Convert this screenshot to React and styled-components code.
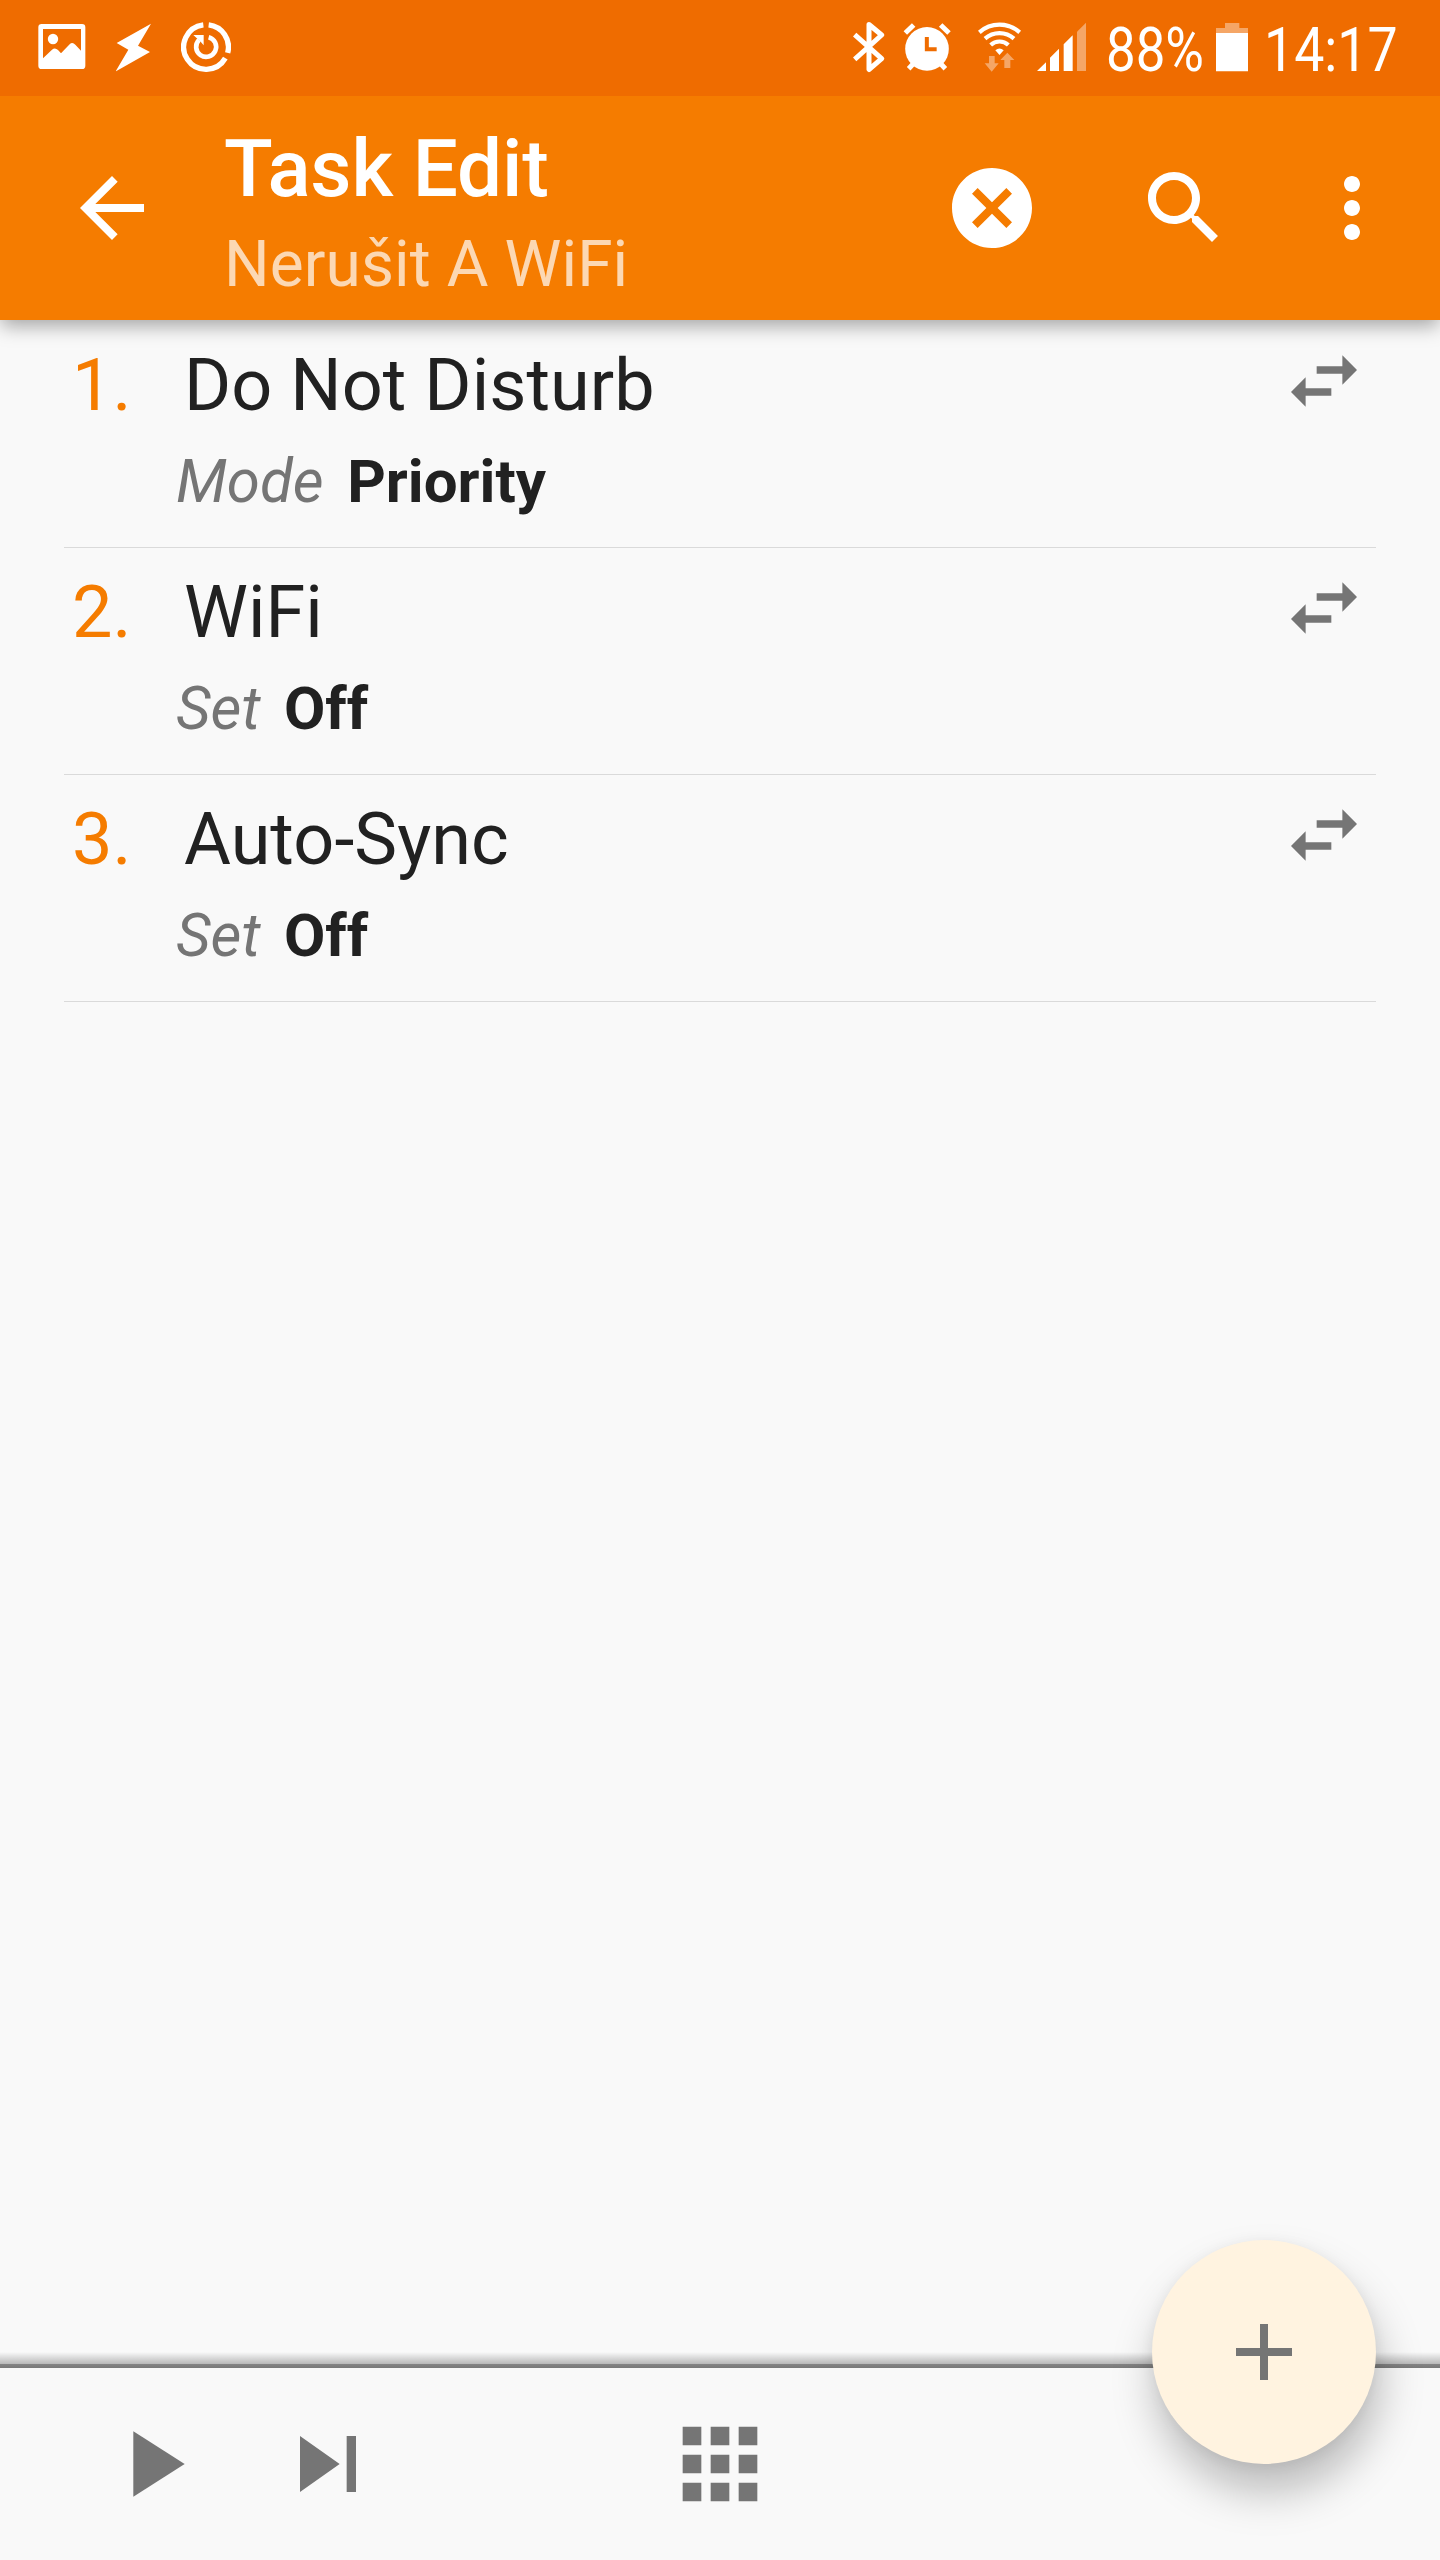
import React from "react";
import styled, { createGlobalStyle } from "styled-components";

const GlobalStyle = createGlobalStyle`
  html, body { margin: 0; padding: 0; background: #f9f9f9; }
  * { box-sizing: border-box; }
`;

const Screen = styled.div`
  width: 1440px;
  height: 2560px;
  display: flex;
  flex-direction: column;
  overflow: hidden;
  background: #f9f9f9;
  color: #212121;
  font-family: Roboto, "Noto Sans", sans-serif;
`;

const StatusBar = styled.header`
  flex: none;
  z-index: 1;
  height: 96px;
  display: flex;
  align-items: flex-start;
  justify-content: space-between;
  padding: 20px 45px 0 38px;
  background: #ef6c00;
  color: #fff;
`;

const StatusGroup = styled.div`
  display: flex;
  height: 56px;
`;

const Glyph = styled.svg`
  display: block;
  flex: none;
  fill: #fff;
  margin-left: ${(p) => p.$gap || 0}px;
`;

const StatusText = styled.span`
  width: ${(p) => p.$width}px;
  margin-left: ${(p) => p.$gap}px;
  font-size: 61px;
  line-height: 58px;
  white-space: nowrap;
  transform: translateY(0.5px) scaleX(${(p) => p.$squeeze});
  transform-origin: 0 50%;
`;

const Toolbar = styled.div`
  flex: none;
  height: 224px;
  display: flex;
  align-items: center;
  padding: 0 40px 0 64px;
  background: #f57c00;
  color: #fff;
  box-shadow: 0 7px 18px -1px rgba(0, 0, 0, 0.34);
`;

const IconButton = styled.button`
  flex: none;
  display: block;
  margin: 0 0 0 ${(p) => p.$gap || 0}px;
  padding: 0;
  border: 0;
  background: none;
  color: ${(p) => p.$color || "inherit"};
  line-height: 0;
`;

const Heading = styled.div`
  flex: 1;
  padding: 9px 0 0 64px;
  display: flex;
  flex-direction: column;
`;

const Title = styled.h1`
  margin: 0;
  font-size: 80px;
  line-height: 94px;
  font-weight: 500;
  letter-spacing: -0.15px;
`;

const Subtitle = styled.div`
  margin-top: 11px;
  font-size: 64px;
  line-height: 76px;
  letter-spacing: 0.1px;
  color: rgba(255, 255, 255, 0.7);
`;

const ActionList = styled.ol`
  flex: 1;
  margin: 0;
  padding: 1px 64px 0;
  list-style: none;
`;

const ActionRow = styled.li`
  height: 227px;
  display: flex;
  align-items: flex-start;
  padding: 16px 8px 0;
  border-bottom: 1px solid #dadada;
`;

const Index = styled.span`
  width: 104px;
  font-size: 72px;
  line-height: 98px;
  color: #f57c00;
`;

const ActionBody = styled.div`
  flex: 1;
`;

const ActionName = styled.div`
  padding-left: 8px;
  font-size: 72px;
  line-height: 98px;
  letter-spacing: 0.05px;
`;

const Params = styled.div`
  display: flex;
  gap: 23.5px;
  margin-top: 1px;
  font-size: 60px;
  line-height: 92px;
`;

const ParamName = styled.em`
  color: #757575;
`;

const ParamValue = styled.strong`
  font-weight: 700;
`;

const Footer = styled.footer`
  flex: none;
  height: 208px;
  position: relative;
`;

const Edge = styled.div`
  height: 16px;
  background: linear-gradient(to bottom, rgba(0, 0, 0, 0) 0, rgba(0, 0, 0, 0.26) 12px, #858585 12px, #797979 16px);
`;

const Controls = styled.div`
  height: 192px;
  display: grid;
  grid-template-columns: 176px 392px 1fr;
  align-items: center;
  padding-left: 96px;
  color: #757575;
`;

const Fab = styled.button`
  position: absolute;
  right: 64px;
  bottom: 96px;
  width: 224px;
  height: 224px;
  padding: 0;
  border: 0;
  border-radius: 50%;
  display: grid;
  place-items: center;
  background: #fff3e0;
  color: #757575;
  box-shadow: 4px 28px 44px rgba(0, 0, 0, 0.25), 0 2px 14px rgba(0, 0, 0, 0.06);
`;

const paths = {
  back: "M20 11H7.83l5.59-5.59L12 4l-8 8 8 8 1.41-1.41L7.83 13H20v-2z",
  cancel:
    "M12 2C6.47 2 2 6.47 2 12s4.47 10 10 10 10-4.47 10-10S17.53 2 12 2zm5 13.59L15.59 17 12 13.41 8.41 17 7 15.59 10.59 12 7 8.41 8.41 7 12 10.59 15.59 7 17 8.41 13.41 12 17 15.59z",
  search:
    "M15.5 14h-.79l-.28-.27C15.41 12.59 16 11.11 16 9.5 16 5.91 13.09 3 9.5 3S3 5.91 3 9.5 5.91 16 9.5 16c1.61 0 3.09-.59 4.23-1.57l.27.28v.79l5 4.99L20.49 19l-4.99-5zm-6 0C7.01 14 5 11.99 5 9.5S7.01 5 9.5 5 14 7.01 14 9.5 11.99 14 9.5 14z",
  more: "M12 8c1.1 0 2-.9 2-2s-.9-2-2-2-2 .9-2 2 .9 2 2 2zm0 2c-1.1 0-2 .9-2 2s.9 2 2 2 2-.9 2-2-.9-2-2-2zm0 6c-1.1 0-2 .9-2 2s.9 2 2 2 2-.9 2-2-.9-2-2-2z",
  swap: "M6.99 11L3 15l3.99 4v-3H14v-2H6.99v-3zM21 9l-3.99-4v3H10v2h7.01v3L21 9z",
  play: "M8 5v14l11-7z",
  next: "M6 18l8.5-6L6 6v12zM16 6v12h2V6h-2z",
  apps: "M4 8h4V4H4v4zm6 12h4v-4h-4v4zm-6 0h4v-4H4v4zm0-6h4v-4H4v4zm6 0h4v-4h-4v4zm6-10v4h4V4h-4zm-6 4h4V4h-4v4zm6 6h4v-4h-4v4zm0 6h4v-4h-4v4z",
  add: "M19 13h-6v6h-2v-6H5v-2h6V5h2v6h6v2z",
};

const Icon = ({ name, size = 96 }) => (
  <svg width={size} height={size} viewBox="0 0 24 24" fill="currentColor" display="block" aria-hidden="true">
    <path d={paths[name]} />
  </svg>
);

const PictureGlyph = () => (
  <Glyph width="48" height="56" viewBox="114 60 144 168">
    <path
      fillRule="evenodd"
      d="M125 72H246Q256 72 256 82V197Q256 207 246 207H125Q115 207 115 197V82Q115 72 125 72ZM129 87V175L156 149Q165 141 174 150L183 160L209 133Q217 125 226 134L243 152V87Z"
    />
    <circle cx="159" cy="117" r="15.5" />
  </Glyph>
);

const BoltGlyph = () => (
  <Glyph $gap={30} width="36" height="56" viewBox="348 60 108 168">
    <path d="M453 71L414 137L450 156L347 214L385 149L350 129Z" />
  </Glyph>
);

const RestartGlyph = () => (
  <Glyph $gap={29} width="50" height="56" viewBox="543 60 150 168">
    <g fill="none" stroke="#fff">
      <path strokeWidth="16" d="M626 74.5A67 67 0 0 1 683 158.500M676 174.500A67 67 0 1 1 610 74.500" />
      <path strokeWidth="14" d="M626 111.500A30 30 0 1 1 597 119.500" />
    </g>
    <path d="M580 105H611V136L602 125L592 116Z" />
  </Glyph>
);

const BluetoothGlyph = () => (
  <Glyph width="32" height="56" viewBox="98 60 96 168">
    <path
      fill="none"
      stroke="#fff"
      strokeWidth="15"
      strokeLinejoin="round"
      d="M103 104L184 176L146 208.500V73.500L184 105L103 178"
    />
  </Glyph>
);

const AlarmGlyph = () => (
  <Glyph $gap={18} width="48" height="56" viewBox="250 60 144 168">
    <circle cx="322" cy="146.500" r="65.500" />
    <path
      fill="none"
      stroke="#fff"
      strokeWidth="15"
      d="M257 99L282 75M363 75L388 99M267 206L285 187M377 206L359 187"
    />
    <path fill="none" stroke="#ef6c00" strokeWidth="12" d="M321.500 111V148H351" />
  </Glyph>
);

const WifiGlyph = () => (
  <Glyph $gap={27} width="44" height="56" viewBox="474 60 132 168">
    <g fill="none" stroke="#fff" strokeWidth="12.500">
      <path d="M478 97A91 91 0 0 1 599 97" />
      <path d="M495 116A65 65 0 0 1 582 116" />
      <path d="M512 135A39 39 0 0 1 565 135" />
    </g>
    <path d="M526 151Q538.500 140 551 151L538.500 165Z" />
    <path fillOpacity="0.4" d="M507 168H524V190H536L515 215L494 190H507Z" />
    <path fillOpacity="0.4" d="M553 204V180H541L562 158L583 180H571V204Z" />
  </Glyph>
);

const SignalGlyph = () => (
  <Glyph $gap={15} width="50" height="56" viewBox="651 60 150 168">
    <path d="M651 213L678 187V213ZM690 213V173L717 146V213ZM731 213V133L758 106V213Z" />
    <path fillOpacity="0.4" d="M771 213V95L798 68V213Z" />
  </Glyph>
);

const BatteryGlyph = () => (
  <Glyph $gap={4} width="32" height="56" viewBox="408 60 96 168">
    <path fillOpacity="0.4" d="M435 69H478V84H504V99H408V84H435Z" />
    <path d="M408 99H504V214H408Z" />
  </Glyph>
);

const actions = [
  { name: "Do Not Disturb", param: "Mode", value: "Priority" },
  { name: "WiFi", param: "Set", value: "Off" },
  { name: "Auto-Sync", param: "Set", value: "Off" },
];

export default function App() {
  return (
    <Screen>
      <GlobalStyle />
      <StatusBar>
        <StatusGroup>
          <PictureGlyph />
          <BoltGlyph />
          <RestartGlyph />
        </StatusGroup>
        <StatusGroup>
          <BluetoothGlyph />
          <AlarmGlyph />
          <WifiGlyph />
          <SignalGlyph />
          <StatusText $gap={19} $width={106} $squeeze={0.865}>88%</StatusText>
          <BatteryGlyph />
          <StatusText $gap={16} $width={131} $squeeze={0.88}>14:17</StatusText>
        </StatusGroup>
      </StatusBar>

      <Toolbar>
        <IconButton aria-label="Back"><Icon name="back" /></IconButton>
        <Heading>
          <Title>Task Edit</Title>
          <Subtitle>Nerušit A WiFi</Subtitle>
        </Heading>
        <IconButton aria-label="Cancel"><Icon name="cancel" /></IconButton>
        <IconButton aria-label="Search" $gap={96}><Icon name="search" /></IconButton>
        <IconButton aria-label="More" $gap={72}><Icon name="more" /></IconButton>
      </Toolbar>

      <ActionList>
        {actions.map((a, i) => (
          <ActionRow key={a.name}>
            <Index>{i + 1}.</Index>
            <ActionBody>
              <ActionName>{a.name}</ActionName>
              <Params>
                <ParamName>{a.param}</ParamName>
                <ParamValue>{a.value}</ParamValue>
              </Params>
            </ActionBody>
            <IconButton aria-label="Move" $color="#757575"><Icon name="swap" size={88} /></IconButton>
          </ActionRow>
        ))}
      </ActionList>

      <Footer>
        <Edge />
        <Controls>
          <IconButton aria-label="Play"><Icon name="play" size={112} /></IconButton>
          <IconButton aria-label="Step"><Icon name="next" size={112} /></IconButton>
          <IconButton aria-label="Icon"><Icon name="apps" size={112} /></IconButton>
        </Controls>
        <Fab aria-label="Add"><Icon name="add" /></Fab>
      </Footer>
    </Screen>
  );
}
